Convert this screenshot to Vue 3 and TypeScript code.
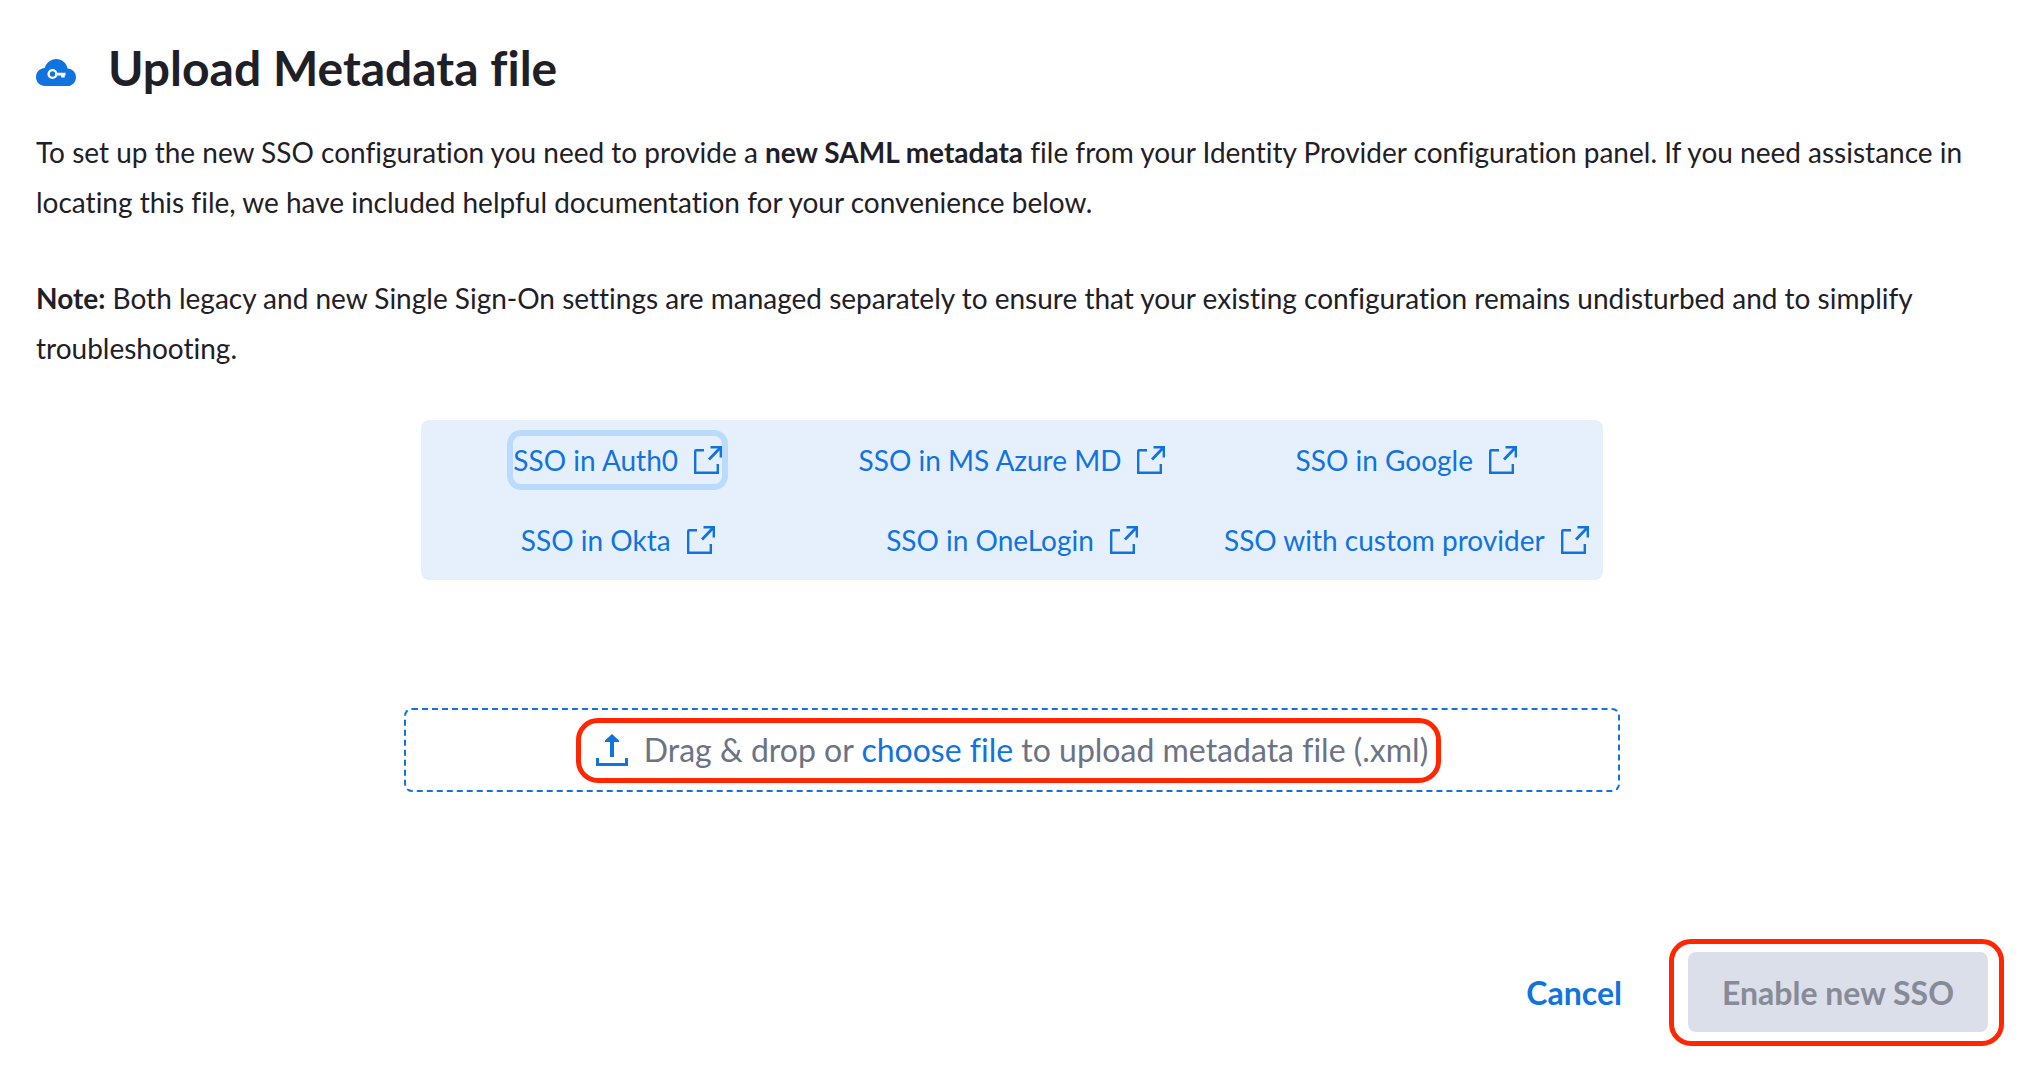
<script setup lang="ts">
import { ref } from 'vue'

interface GuideLink {
  label: string
  href: string
  focused?: boolean
}

const guides: GuideLink[] = [
  { label: 'SSO in Auth0', href: '#auth0', focused: true },
  { label: 'SSO in MS Azure MD', href: '#azure' },
  { label: 'SSO in Google', href: '#google' },
  { label: 'SSO in Okta', href: '#okta' },
  { label: 'SSO in OneLogin', href: '#onelogin' },
  { label: 'SSO with custom provider', href: '#custom' },
]

const metadataFile = ref<File | null>(null)

function onPick(event: Event): void {
  const input = event.target as HTMLInputElement
  metadataFile.value = input.files?.[0] ?? null
}

function onDrop(event: DragEvent): void {
  metadataFile.value = event.dataTransfer?.files[0] ?? null
}
</script>

<template>
  <main class="page">
    <header class="heading">
      <svg class="cloud" viewBox="0 0 40 27" aria-hidden="true">
        <path
          fill="#1173e0"
          d="M9 27C4 27 0 23.200 0 18C0 13 3.600 9.300 8.600 8.900C10.600 3.600 15 0 20 0C26 0 30.600 4 31.600 9.600C36.600 9.900 40 13.600 40 18.200C40 23.200 36.200 27 31.400 27Z"
        />
        <circle cx="16.500" cy="15" r="3.900" fill="none" stroke="#fff" stroke-width="2.400" />
        <path fill="#fff" d="M20 13.700H29.500V16.500H28.700V18.400H25.200V16.500H20Z" />
      </svg>
      <h1>Upload Metadata file</h1>
    </header>

    <div class="intro">
      <p>
        To set up the new SSO configuration you need to provide a
        <strong>new SAML metadata</strong> file from your Identity Provider configuration panel. If
        you need assistance in locating this file, we have included helpful documentation for your
        convenience below.
      </p>
      <p>
        <strong>Note:</strong> Both legacy and new Single Sign-On settings are managed separately to
        ensure that your existing configuration remains undisturbed and to simplify troubleshooting.
      </p>
    </div>

    <nav class="guides" aria-label="SSO documentation">
      <a
        v-for="guide in guides"
        :key="guide.label"
        :href="guide.href"
        class="guide"
        :class="{ 'guide--focused': guide.focused }"
      >
        <span>{{ guide.label }}</span>
        <svg class="external" viewBox="0 0 28 28" aria-hidden="true">
          <g fill="none" stroke="currentColor" stroke-width="2.400">
            <path d="M10 4.200H2.200Q1.200 4.200 1.200 5.200V26.800H23.800V18" />
            <path d="M15 13.500L26.500 1.500" stroke-width="2.800" />
            <path d="M16.500 1.200H26.800V11.500" />
          </g>
        </svg>
      </a>
    </nav>

    <section class="dropzone" @dragover.prevent @drop.prevent="onDrop">
      <div class="prompt marked">
        <svg class="upload" viewBox="0 0 32 32" aria-hidden="true">
          <path fill="currentColor" d="M16 0L23 6.500V8H18V23H14V8H9V6.500Z" />
          <path fill="none" stroke="currentColor" stroke-width="3" d="M1.500 24V30.500H30.500V24" />
        </svg>
        <p>
          Drag &amp; drop or <label class="choose" for="metadata">choose file</label> to upload
          metadata file (.xml)
        </p>
        <input id="metadata" class="picker" type="file" accept=".xml" @change="onPick" />
      </div>
    </section>

    <footer class="actions">
      <button class="btn btn--link" type="button">Cancel</button>
      <span class="marked marked--button">
        <button class="btn btn--primary" type="button" :disabled="!metadataFile">
          Enable new SSO
        </button>
      </span>
    </footer>
  </main>
</template>

<style>
body {
  margin: 0;
  background: #fff;
}
</style>

<style scoped>
.page {
  box-sizing: border-box;
  padding: 38px 38px 38px 36px;
  font-family: Lato, 'Liberation Sans', sans-serif;
  font-size: 28px;
  font-variant-ligatures: none;
  color: #1f2027;
}

.heading {
  display: flex;
  align-items: baseline;
  gap: 32px;
}

.cloud {
  width: 40px;
  height: 27px;
}

h1 {
  margin: 0;
  font-size: 48px;
  font-weight: 700;
  line-height: 60px;
}

.intro {
  display: grid;
  gap: 46px;
  margin-top: 29px;
  line-height: 50px;
}

p {
  margin: 0;
}

.guides {
  display: grid;
  grid-template-columns: repeat(3, 1fr);
  justify-items: center;
  width: 60.600%;
  margin: 47px auto 0;
  background: #e6f0fd;
  border-radius: 8px;
}

.guide {
  display: flex;
  align-items: center;
  gap: 16px;
  height: 48px;
  margin: 16px 0;
  border-radius: 8px;
  color: #1173e0;
  text-decoration: none;
  white-space: nowrap;
}

.guide--focused {
  box-shadow: 0 0 0 6px #badbfe;
}

.external {
  width: 28px;
  height: 28px;
}

.dropzone {
  box-sizing: border-box;
  display: flex;
  align-items: center;
  justify-content: center;
  width: 62.300%;
  height: 84px;
  margin: 128px auto 0;
  border: 2px dashed #1173e0;
  border-radius: 8px;
}

.prompt {
  display: flex;
  align-items: center;
  gap: 16px;
  font-size: 32px;
  line-height: 42px;
  color: #6b7385;
}

.upload {
  width: 32px;
  height: 32px;
  color: #1173e0;
}

.choose {
  color: #1173e0;
  cursor: pointer;
}

.picker {
  position: absolute;
  width: 1px;
  height: 1px;
  opacity: 0;
}

.marked {
  position: relative;
}

.marked::after {
  content: '';
  position: absolute;
  inset: -11px -13px -12px -20px;
  border: 5px solid #ff2600;
  border-radius: 22px;
  pointer-events: none;
}

.marked--button::after {
  inset: -13px -16px -14px -19px;
}

.actions {
  display: flex;
  justify-content: flex-end;
  gap: 32px;
  margin-top: 160px;
}

.btn {
  height: 80px;
  padding: 0 34px;
  border: 0;
  border-radius: 8px;
  background: none;
  font: inherit;
  font-size: 32px;
  font-weight: 700;
}

.btn--link {
  color: #1173e0;
}

.btn--primary {
  display: block;
  background: #1173e0;
  color: #fff;
}

.btn--primary:disabled {
  background: #dbdfea;
  color: #868b97;
}
</style>
